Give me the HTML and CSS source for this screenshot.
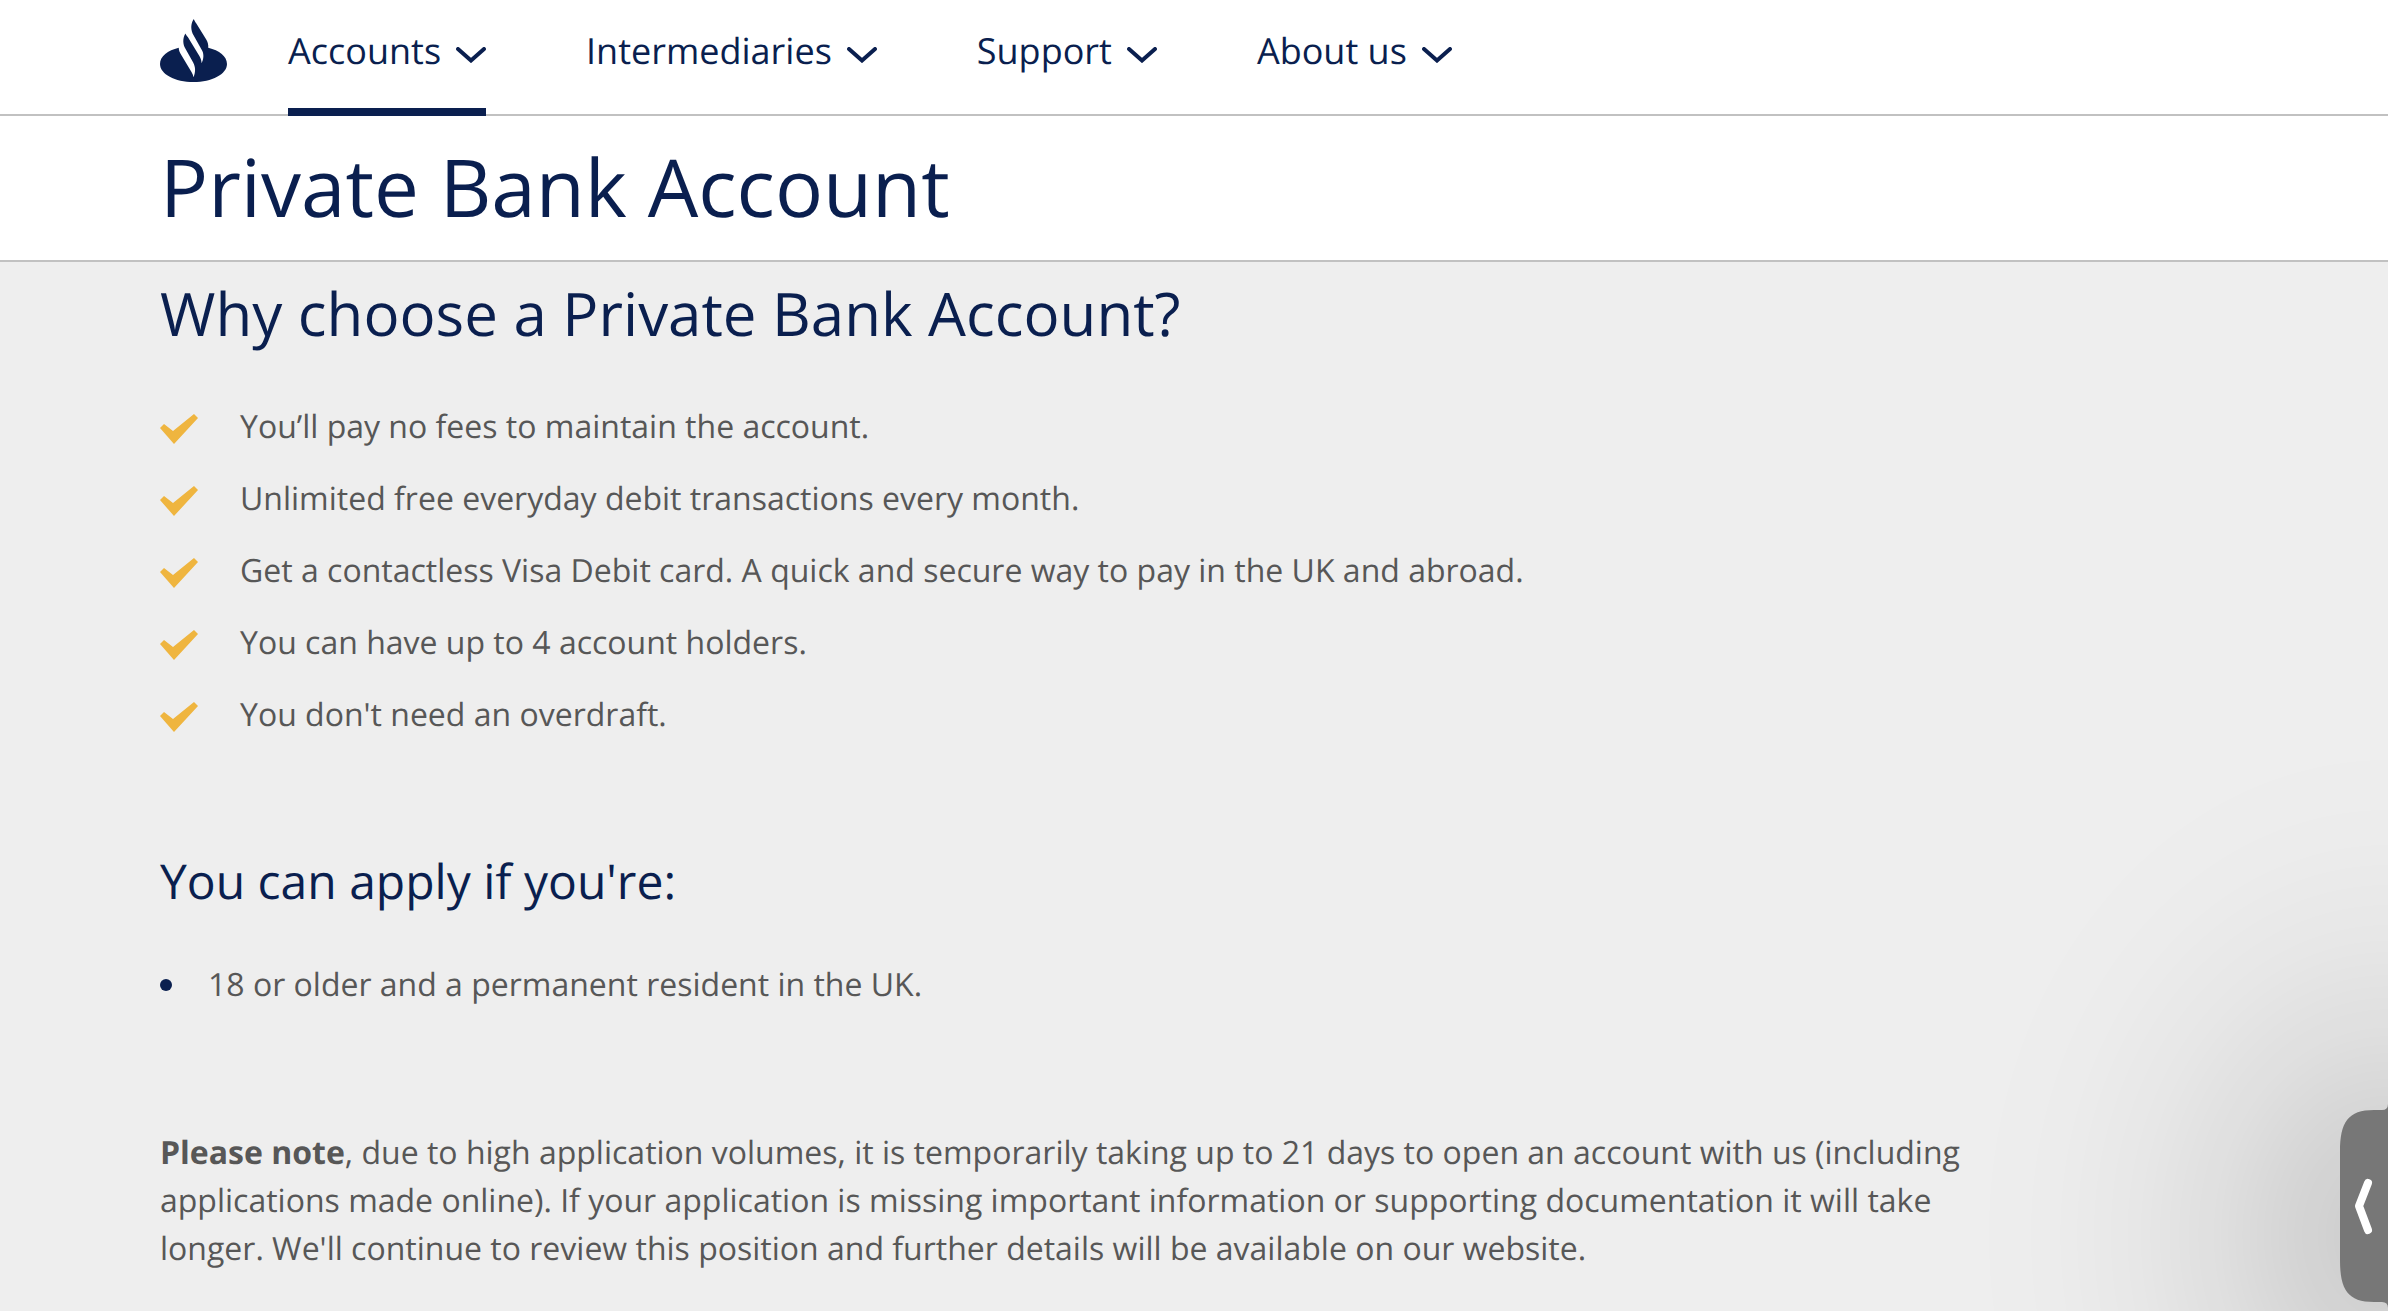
FILE: index.html
```html
<!DOCTYPE html>
<html lang="en">
<head>
<meta charset="utf-8">
<meta name="viewport" content="width=device-width, initial-scale=1">
<title>Private Bank Account</title>
<link rel="stylesheet" href="styles.css">
</head>
<body>
<svg class="symbols" aria-hidden="true">
  <symbol id="chevron" viewBox="0 0 30 16"><path d="M2 2L15 13.500L28 2" fill="none" stroke="currentColor" stroke-width="4" stroke-linecap="round"/></symbol>
  <symbol id="tick" viewBox="0 0 38 30"><path d="M0 14L4 10L13 17L34 0L38 4L14 30Z" fill="currentColor"/></symbol>
</svg>
<header class="site-header">
  <a class="logo" href="#" aria-label="Home">
    <svg viewBox="0 0 200 188" width="67" height="63" aria-hidden="true">
      <path fill="currentColor" d="M101 0C91 14 91 34 101 50L126 95C131 105 131 120 124 132C124 124 122 118 118 111L83 54C79 48 77 46 76 43C67 57 68 75 76 89L99 130C106 143 107 158 100 174C99 168 97 163 94 158L64 108C59 100 56 94 56 86C23 94 0 112 0 134C0 164 45 188 100 188S200 164 200 134C200 112 177 94 144 86C145 76 142 68 138 61L108 13C105 8 102 4 101 0Z"/>
    </svg>
  </a>
  <nav class="main-nav" aria-label="Main">
    <a class="nav-link active" href="#" aria-current="page">Accounts <svg class="chevron"><use href="#chevron"/></svg></a>
    <a class="nav-link" href="#">Intermediaries <svg class="chevron"><use href="#chevron"/></svg></a>
    <a class="nav-link" href="#">Support <svg class="chevron"><use href="#chevron"/></svg></a>
    <a class="nav-link" href="#">About us <svg class="chevron"><use href="#chevron"/></svg></a>
  </nav>
</header>
<div class="title-bar">
  <h1>Private Bank Account</h1>
</div>
<main class="content">
  <h2>Why choose a Private Bank Account?</h2>
  <ul class="benefits">
    <li><svg class="tick"><use href="#tick"/></svg>You’ll pay no fees to maintain the account.</li>
    <li><svg class="tick"><use href="#tick"/></svg>Unlimited free everyday debit transactions every month.</li>
    <li><svg class="tick"><use href="#tick"/></svg>Get a contactless Visa Debit card. A quick and secure way to pay in the UK and abroad.</li>
    <li><svg class="tick"><use href="#tick"/></svg>You can have up to 4 account holders.</li>
    <li><svg class="tick"><use href="#tick"/></svg>You don't need an overdraft.</li>
  </ul>
  <h3>You can apply if you're:</h3>
  <ul class="criteria">
    <li>18 or older and a permanent resident in the UK.</li>
  </ul>
  <p class="note"><strong>Please note</strong>, due to high application volumes, it is temporarily taking up to 21 days to open an account with us (including applications made online). If your application is missing important information or supporting documentation it will take longer. We'll continue to review this position and further details will be available on our website.</p>
</main>
<div class="tab-shade"></div>
<button class="side-tab" type="button" aria-label="Open panel">
  <svg viewBox="0 0 48 204" width="48" height="204" aria-hidden="true">
    <path fill="#777" d="M48 0Q48 6 42 6H34C8 6 0 18 0 48V156C0 186 8 198 34 198H42Q48 198 48 204Z"/>
    <path d="M28 79L19 102L28 126" fill="none" stroke="#fff" stroke-width="8" stroke-linecap="round" stroke-linejoin="round"/>
  </svg>
</button>
</body>
</html>
```

FILE: styles.css
```css
* { box-sizing: border-box; }

body {
  margin: 0;
  min-height: 100vh;
  background: #eee;
  color: #575757;
  font: 400 32px/48px "Open Sans", "Noto Sans", sans-serif;
  text-rendering: geometricPrecision;
}

h1, h2, h3, p, ul { margin: 0; padding: 0; font-weight: 400; }
ul { list-style: none; }
h1, h2, h3 { color: #0a1f4f; }

.symbols { position: absolute; width: 0; height: 0; }

.site-header {
  display: flex;
  gap: 61px;
  height: 116px;
  padding: 0 160px;
  background: #fff;
  border-bottom: 2px solid #c1c1c1;
}

.logo { display: flex; padding-top: 19px; color: #0a1f4f; }

.main-nav { display: flex; gap: 100px; height: 116px; }

.nav-link {
  display: flex;
  gap: 15px;
  padding-top: 27px;
  border-bottom: 8px solid transparent;
  color: #0a1f4f;
  font-size: 36px;
  text-decoration: none;
  white-space: nowrap;
}
.nav-link.active { border-color: #0a1f4f; }

.chevron { width: 30px; height: 16px; margin-top: 20px; }

.title-bar {
  padding: 23px 160px 25px;
  background: #fff;
  border-bottom: 2px solid #c1c1c1;
}
h1 { font-size: 80px; line-height: 96px; }

.content { padding: 15px 160px 24px; }

h2 { margin-bottom: 54px; font-size: 60px; line-height: 72px; }

.benefits { display: grid; gap: 24px; margin-bottom: 111px; }
.benefits li { display: flex; gap: 42px; }
.tick { flex: none; width: 38px; height: 30px; margin-top: 11px; color: #efb53f; }

h3 { margin-bottom: 47px; font-size: 48px; line-height: 64px; }

.criteria { margin-bottom: 120px; }
.criteria li { display: flex; align-items: center; gap: 36px; }
.criteria li::before {
  content: "";
  width: 12px;
  height: 12px;
  border-radius: 50%;
  background: #0a1f4f;
}

.note { max-width: 1840px; }

/* soft shadow falling from the side tab onto the page */
.tab-shade {
  position: fixed;
  right: 0;
  bottom: 0;
  width: 420px;
  height: 576px;
  background: radial-gradient(420px 500px at 100% 500px,
    rgba(0, 0, 0, .14) 0%, rgba(0, 0, 0, .125) 12%, rgba(0, 0, 0, .096) 27%,
    rgba(0, 0, 0, .055) 44%, rgba(0, 0, 0, .026) 60%, rgba(0, 0, 0, .008) 80%,
    transparent 100%);
  pointer-events: none;
}

.side-tab {
  position: fixed;
  right: 0;
  bottom: 3px;
  padding: 0;
  border: 0;
  background: none;
  cursor: pointer;
}
.side-tab svg { display: block; }
```
